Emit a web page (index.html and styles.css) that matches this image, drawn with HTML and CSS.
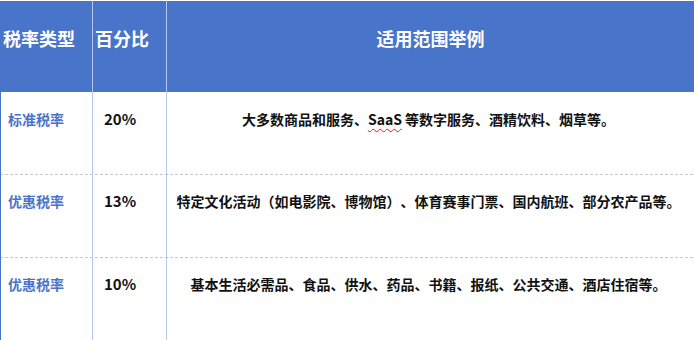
FILE: index.html
```html
<!DOCTYPE html>
<html lang="zh-CN">
<head>
<meta charset="utf-8">
<title>税率</title>
<link rel="stylesheet" href="styles.css">
</head>
<body>
<div class="table">
  <div class="row head">
    <div class="cell c1">税率类型</div>
    <div class="cell c2">百分比</div>
    <div class="cell c3">适用范围举例</div>
  </div>
  <div class="row body">
    <div class="cell c1">标准税率</div>
    <div class="cell c2">20%</div>
    <div class="cell c3">大多数商品和服务、<span class="spell">SaaS</span> 等数字服务、酒精饮料、烟草等。</div>
  </div>
  <div class="row body dashed">
    <div class="cell c1">优惠税率</div>
    <div class="cell c2">13%</div>
    <div class="cell c3">特定文化活动（如电影院、博物馆）、体育赛事门票、国内航班、部分农产品等。</div>
  </div>
  <div class="row body dashed last">
    <div class="cell c1">优惠税率</div>
    <div class="cell c2">10%</div>
    <div class="cell c3">基本生活必需品、食品、供水、药品、书籍、报纸、公共交通、酒店住宿等。</div>
  </div>
</div>
</body>
</html>
```
FILE: styles.css
```css
html, body {
  margin: 0;
  padding: 0;
  background: #ffffff;
}
body {
  font-family: "Noto Sans CJK SC", "Noto Sans", sans-serif;
  overflow: hidden;
  text-spacing-trim: space-all;
}
.table {
  margin-top: 1px;
  width: 694px;
}
.row {
  display: grid;
  grid-template-columns: 92px 74px 1fr;
}
.cell {
  box-sizing: border-box;
  white-space: nowrap;
}
.c2, .c3 {
  border-left: 1px solid #b3c6ee;
}
.head {
  height: 91px;
  background: #4874c9;
  color: #ffffff;
  font-size: 18px;
  font-weight: 700;
  line-height: 24px;
}
.head .cell {
  padding-top: 25px;
}
.head .c1 {
  padding-left: 3px;
}
.head .c2 {
  padding-left: 2px;
}
.head .c3 {
  text-align: center;
}
.body {
  height: 82px;
  font-size: 14px;
  line-height: 20px;
  font-weight: 700;
  color: #111111;
}
.body.dashed {
  height: 83px;
  background-image: repeating-linear-gradient(to right, #c8c8c8 0, #c8c8c8 3px, transparent 3px, transparent 5px);
  background-size: 100% 1px;
  background-repeat: no-repeat;
  background-position: 0 0;
}
.body .cell {
  padding-top: 17px;
}
.body .c1 {
  border-left: 1px solid #4874c9;
  padding-left: 7px;
  color: #4a74c9;
  font-weight: 600;
}
.body .c2 {
  padding-left: 11px;
  font-size: 15px;
}
.body .c3 {
  text-align: center;
  padding-right: 4px;
}
.spell {
  text-decoration: underline wavy #e02020;
  text-decoration-thickness: 1px;
  text-underline-offset: 3px;
}
```
